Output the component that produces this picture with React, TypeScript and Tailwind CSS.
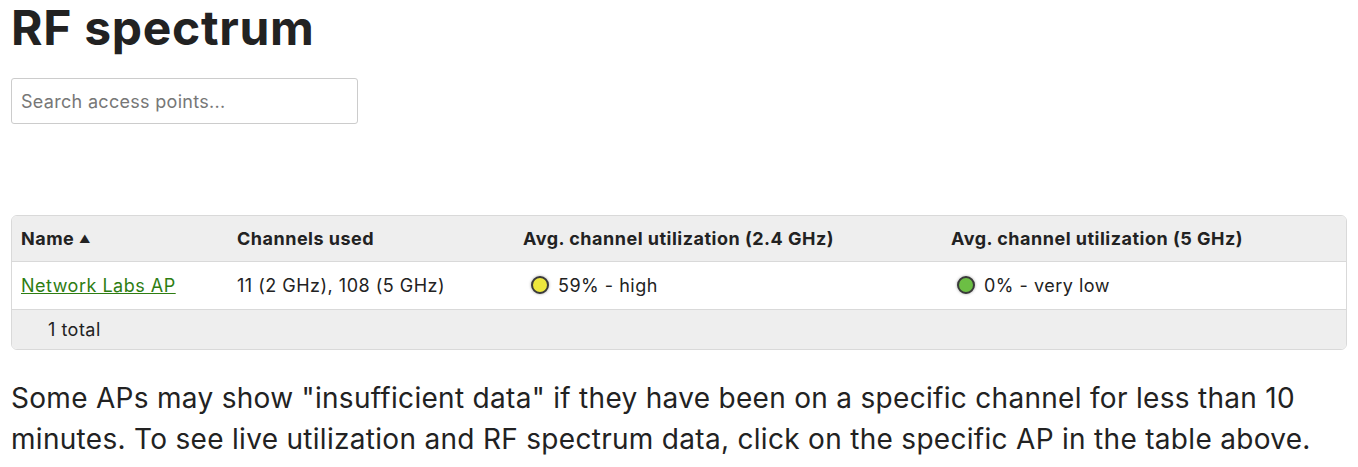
import React from "react";

const dot = "inline-block w-[18px] h-[18px] rounded-full border-2 border-[#3a3a3a] shadow-[0_0_3px_rgba(0,0,0,0.35)]";

export default function App() {
  return (
    <div className="font-['Inter','Liberation_Sans',sans-serif] text-[#222] bg-white min-h-[467px] px-[11px]">
      <h1 className="text-[48px] font-bold leading-[56px] tracking-[0.7px]">RF spectrum</h1>
      <input
        placeholder="Search access points..."
        className="mt-[22px] w-[347px] h-[46px] px-[9px] border border-[#ccc] rounded-[3px] text-[18px] tracking-[0.3px] placeholder:text-[#777] outline-none"
      />

      <div className="mt-[91px] border border-[#d9d9d9] rounded-[6px] overflow-hidden">
        <table className="w-full text-[18px] tracking-[0.5px] border-collapse">
          <thead>
            <tr className="bg-[#eeeeee] h-[45px] text-left">
              <th className="pl-[9px] w-[225px] font-bold">
                Name <span className="text-[11px] align-[2px]">▲</span>
              </th>
              <th className="w-[286px] font-bold">Channels used</th>
              <th className="w-[428px] font-bold">Avg. channel utilization (2.4 GHz)</th>
              <th className="font-bold">Avg. channel utilization (5 GHz)</th>
            </tr>
          </thead>
          <tbody>
            <tr className="h-[48px] bg-white border-t border-[#d9d9d9]">
              <td className="pl-[9px]">
                <a href="#" className="text-[#2e7d12] underline">Network Labs AP</a>
              </td>
              <td>11 (2 GHz), 108 (5 GHz)</td>
              <td>
                <span className="flex items-center gap-[9px] pl-[8px]">
                  <span className={`${dot} bg-[#ede73c]`} />
                  59% - high
                </span>
              </td>
              <td>
                <span className="flex items-center gap-[9px] pl-[6px]">
                  <span className={`${dot} bg-[#6cbf44]`} />
                  0% - very low
                </span>
              </td>
            </tr>
            <tr className="h-[40px] bg-[#eeeeee] border-t border-[#d9d9d9]">
              <td colSpan={4} className="pl-[36px]">1 total</td>
            </tr>
          </tbody>
        </table>
      </div>

      <p className="mt-[28px] text-[28px] leading-[41px] tracking-[0.3px] max-w-[1320px]">
        Some APs may show "insufficient data" if they have been on a specific channel for less than 10 minutes. To see live utilization and RF spectrum data, click on the specific AP in the table above.
      </p>
    </div>
  );
}
